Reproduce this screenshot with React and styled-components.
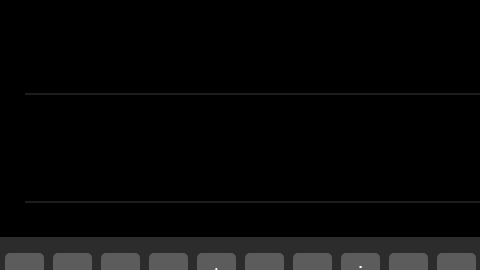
import React from "react";
import styled, { createGlobalStyle } from "styled-components";

const Global = createGlobalStyle`
  html, body { margin: 0; padding: 0; background: #000; }
  body { font-family: "Liberation Sans", Arial, sans-serif; }
`;

const Screen = styled.div`
  width: 480px;
  height: 270px;
  display: flex;
  flex-direction: column;
  background: #000;
  overflow: hidden;
`;

const Content = styled.div`
  flex: 1;
  display: flex;
  flex-direction: column;
  padding-top: 93px;
  padding-left: 25px;
`;

const Rule = styled.div`
  height: 2px;
  background: #1c1c20;
  margin-bottom: ${(p) => p.$gap || 0}px;
`;

const Keyboard = styled.div`
  height: 33px;
  background: #2c2c2c;
  padding: 16px 4px 0 5px;
  box-sizing: border-box;
  overflow: hidden;
`;

const KeyRow = styled.div`
  display: flex;
  gap: 9px;
`;

const Key = styled.div`
  width: 39px;
  height: 42px;
  flex: none;
  border-radius: 5px;
  background: #5c5c5c;
  color: #fff;
  font-size: 23px;
  line-height: 46px;
  text-align: center;
`;

const keys = ["q", "w", "e", "r", "t", "y", "u", "i", "o", "p"];

export default function App() {
  return (
    <Screen>
      <Global />
      <Content>
        <Rule $gap={106} />
        <Rule />
      </Content>
      <Keyboard>
        <KeyRow>
          {keys.map((k) => (
            <Key key={k}>{k}</Key>
          ))}
        </KeyRow>
      </Keyboard>
    </Screen>
  );
}
